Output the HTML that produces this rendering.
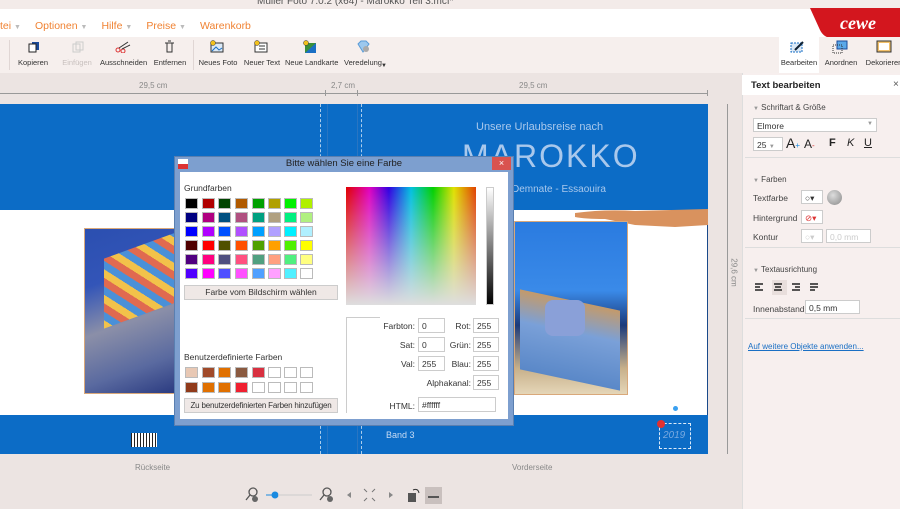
<!DOCTYPE html>
<html><head><meta charset="utf-8"><style>
*{margin:0;padding:0;box-sizing:border-box}
body{width:900px;height:509px;overflow:hidden;position:relative;background:#ece4e2;font-family:"Liberation Sans",sans-serif;font-size:9px;color:#333}
.a{position:absolute;white-space:nowrap}
.sw{position:absolute;width:13px;height:11px;border:1px solid #bbb}
.lbl{position:absolute;font-size:8.5px;color:#333;text-align:right}
.fld{position:absolute;height:15px;border:1px solid #ccc;background:#fff;font-size:8.5px;padding:2px 3px;color:#333;white-space:nowrap}
.tl{position:absolute;top:58px;font-size:7.5px;color:#333;text-align:center;white-space:nowrap}
</style></head><body>
<div class="a" style="left:0;top:0;width:900px;height:9px;background:#f3ebe9"></div>
<div class="a" style="left:257px;top:-4px;font-size:10px;color:#555">Müller Foto 7.0.2 (x64) - Marokko Teil 3.mcf*</div>
<div class="a" style="left:0;top:9px;width:900px;height:28px;background:#fff"></div>
<div class="a" style="top:20px;left:0;font-size:10.5px;color:#f08232">tei <span style="color:#bbb;font-size:7px">▼</span><span style="margin-left:14px">Optionen</span> <span style="color:#bbb;font-size:7px">▼</span><span style="margin-left:14px">Hilfe</span> <span style="color:#bbb;font-size:7px">▼</span><span style="margin-left:14px">Preise</span> <span style="color:#bbb;font-size:7px">▼</span><span style="margin-left:14px">Warenkorb</span></div>
<svg class="a" style="left:810px;top:8px" width="90" height="30"><path d="M0 0H90V30H22Q14 30 10 22Z" fill="#d3161e"/><text x="30" y="21" fill="#fff" font-family="Liberation Serif" font-style="italic" font-weight="bold" font-size="18">cewe</text></svg>
<div class="a" style="left:0;top:37px;width:900px;height:36px;background:#f6efed"></div>
<div class="a" style="left:9px;top:40px;width:1px;height:30px;background:#e0d6d4"></div>
<div class="a" style="left:193px;top:40px;width:1px;height:30px;background:#e0d6d4"></div>
<div class="a" style="left:779px;top:37px;width:40px;height:36px;background:#fff"></div>
<svg class="a" style="left:28px;top:41px" width="12" height="12"><rect x="4" y="1" width="7" height="8" fill="#1a4a9a"/><rect x="1" y="3" width="7" height="8" fill="#fff" stroke="#222"/></svg>
<svg class="a" style="left:72px;top:41px" width="12" height="12"><rect x="1" y="3" width="7" height="8" fill="none" stroke="#ccc"/><rect x="4" y="1" width="7" height="8" fill="none" stroke="#ccc"/></svg>
<svg class="a" style="left:115px;top:41px" width="16" height="12"><circle cx="3" cy="9" r="2" stroke="#d33" fill="none"/><circle cx="8" cy="10" r="2" stroke="#d33" fill="none"/><path d="M4 7L13 1M7 8L15 4" stroke="#333"/></svg>
<svg class="a" style="left:164px;top:40px" width="11" height="13"><path d="M1 3H10M3 3V12H8V3M4 1H7" stroke="#333" fill="none"/></svg>
<svg class="a" style="left:210px;top:40px" width="14" height="13"><rect x="1" y="3" width="12" height="9" fill="#dbe9f7" stroke="#333"/><path d="M2 11L6 7L9 10L12 8" stroke="#1a6fc4" fill="none"/><circle cx="3" cy="3" r="2.5" fill="#f2c11c" stroke="#333" stroke-width=".5"/></svg>
<svg class="a" style="left:254px;top:40px" width="14" height="13"><rect x="1" y="3" width="12" height="9" fill="#fff" stroke="#333"/><path d="M5 6H11M5 9H11" stroke="#333"/><circle cx="3" cy="3" r="2.5" fill="#f2c11c" stroke="#333" stroke-width=".5"/></svg>
<svg class="a" style="left:303px;top:40px" width="14" height="14"><rect x="2" y="3" width="11" height="10" fill="#3a8f3a"/><path d="M2 13L13 3V13Z" fill="#1a6fc4"/><circle cx="3" cy="3" r="2.5" fill="#f2c11c" stroke="#333" stroke-width=".5"/></svg>
<svg class="a" style="left:356px;top:40px" width="14" height="13"><path d="M2 4L5 1H10L13 4L7 12Z" fill="#9cc8ee" stroke="#5a9bd6"/><circle cx="10" cy="9" r="3" fill="#aaa"/></svg>
<svg class="a" style="left:790px;top:40px" width="16" height="14"><rect x="1" y="3" width="11" height="9" fill="#dbe9f7" stroke="#1a6fc4" stroke-dasharray="2 1"/><path d="M5 10L13 2" stroke="#123" stroke-width="2"/></svg>
<svg class="a" style="left:832px;top:40px" width="16" height="14"><rect x="5" y="1" width="10" height="8" fill="#5aa8e8" stroke="#1a4a9a"/><rect x="1" y="5" width="9" height="8" fill="none" stroke="#333" stroke-dasharray="1 1"/></svg>
<svg class="a" style="left:876px;top:40px" width="16" height="14"><rect x="1" y="1" width="14" height="11" fill="#f2c06a" stroke="#333"/><rect x="3" y="3" width="10" height="7" fill="#fff"/></svg>
<div class="tl" style="left:18px;width:30px">Kopieren</div>
<div class="tl" style="left:60px;width:34px;color:#c8c0be">Einfügen</div>
<div class="tl" style="left:100px;width:46px">Ausschneiden</div>
<div class="tl" style="left:152px;width:36px">Entfernen</div>
<div class="tl" style="left:198px;width:40px">Neues Foto</div>
<div class="tl" style="left:243px;width:38px">Neuer Text</div>
<div class="tl" style="left:285px;width:52px">Neue Landkarte</div>
<div class="tl" style="left:343px;width:40px">Veredelung</div>
<div class="a" style="left:381px;top:63px;font-size:6px">▼</div>
<div class="tl" style="left:779px;width:40px">Bearbeiten</div>
<div class="tl" style="left:822px;width:38px">Anordnen</div>
<div class="tl" style="left:864px;width:40px">Dekorieren</div>
<div class="a" style="left:0;top:73px;width:742px;height:30px;background:#ece4e2"></div>
<div class="a" style="left:139px;top:81px;font-size:8px;color:#888">29,5 cm</div>
<div class="a" style="left:331px;top:81px;font-size:8px;color:#888">2,7 cm</div>
<div class="a" style="left:519px;top:81px;font-size:8px;color:#888">29,5 cm</div>
<div class="a" style="left:0;top:93px;width:708px;height:1px;background:#999"></div>
<div class="a" style="left:325px;top:90px;width:1px;height:6px;background:#999"></div>
<div class="a" style="left:357px;top:90px;width:1px;height:6px;background:#999"></div>
<div class="a" style="left:707px;top:90px;width:1px;height:6px;background:#999"></div>
<div class="a" style="left:0;top:104px;width:708px;height:350px;background:#fff;border:1px solid #1a4a8a;border-left:none"></div>
<div class="a" style="left:0;top:104px;width:708px;height:106px;background:#0c6cc6"></div>
<div class="a" style="left:0;top:415px;width:708px;height:39px;background:#0c6cc6"></div>
<div class="a" style="left:320px;top:104px;width:1px;height:350px;border-left:1px dashed #fff"></div>
<div class="a" style="left:327px;top:104px;width:1px;height:350px;background:#3a7ac0"></div>
<div class="a" style="left:357px;top:104px;width:1px;height:350px;background:#3a7ac0"></div>
<div class="a" style="left:361px;top:104px;width:1px;height:350px;border-left:1px dashed #fff"></div>
<div class="a" style="left:320px;top:104px;width:42px;height:350px;background:#0c6cc6;opacity:.35"></div>
<div class="a" style="left:476px;top:121px;font-size:11px;color:#a9c8ec">Unsere Urlaubsreise nach</div>
<div class="a" style="left:462px;top:138px;font-size:32px;color:#a9c8ec;letter-spacing:2px">MAROKKO</div>
<div class="a" style="left:512px;top:184px;font-size:10px;color:#a9c8ec">Demnate - Essaouira</div>
<svg class="a" style="left:575px;top:207px" width="133" height="22"><path d="M0 6Q30 2 60 4L133 2V18L100 20L60 18L30 12Q10 12 0 10Z" fill="#d9925e"/></svg>
<div class="a" style="left:84px;top:228px;width:95px;height:166px;border:1px solid #d9a87a;background:linear-gradient(160deg,#2b4fb0 0%,#3355b8 30%,#8b8fa8 55%,#5a6aa0 80%,#2a3a80 100%)"></div>
<div class="a" style="left:104px;top:245px;width:75px;height:70px;background:repeating-linear-gradient(45deg,#f2c24a 0 6px,#4a90d8 6px 12px,#e06a50 12px 18px);transform:skewY(-20deg)"></div>
<div class="a" style="left:131px;top:433px;width:26px;height:14px;background:repeating-linear-gradient(90deg,#222 0 1px,#fff 1px 3px)"></div>
<div class="a" style="left:514px;top:221px;width:114px;height:174px;border:1px solid #d9a87a;background:linear-gradient(180deg,#2a7be0 0%,#3a8ae8 40%,#1c3a7a 60%,#c7b08a 85%,#e5d6b8 100%)"></div>
<div class="a" style="left:520px;top:300px;width:100px;height:80px;background:linear-gradient(180deg,#c49a6a,#7aa0d8 40%,#5a88c8);transform:skewY(12deg)"></div>
<div class="a" style="left:545px;top:300px;width:40px;height:36px;background:#8aa0d8;border-radius:8px"></div>
<div class="a" style="left:386px;top:430px;font-size:9px;color:#c8dcf4">Band 3</div>
<div class="a" style="left:659px;top:423px;width:32px;height:26px;border:1px dashed #dceaf8"></div>
<div class="a" style="left:663px;top:430px;font-size:10px;color:#7aaae0;font-style:italic">2019</div>
<div class="a" style="left:657px;top:420px;width:8px;height:8px;border-radius:50%;background:#e03030"></div>
<div class="a" style="left:673px;top:406px;width:5px;height:5px;border-radius:50%;background:#3aa0f0"></div>
<div class="a" style="left:727px;top:104px;width:1px;height:350px;background:#999"></div>
<div class="a" style="left:720px;top:268px;font-size:8px;color:#888;transform:rotate(90deg)">29,6 cm</div>
<div class="a" style="left:135px;top:463px;font-size:8px;color:#888">Rückseite</div>
<div class="a" style="left:512px;top:463px;font-size:8px;color:#888">Vorderseite</div>
<svg class="a" style="left:240px;top:484px" width="210" height="22"><circle cx="13" cy="8" r="4" fill="none" stroke="#555" stroke-width="1.3"/><path d="M10 11L6 16" stroke="#555" stroke-width="1.3"/><circle cx="15" cy="15" r="3" fill="#666"/><path d="M26 11H33" stroke="#1a8ae0"/><circle cx="35" cy="11" r="3.5" fill="#1a8ae0"/><path d="M38 11H72" stroke="#ccc"/><circle cx="87" cy="8" r="4" fill="none" stroke="#555" stroke-width="1.3"/><path d="M84 11L80 16" stroke="#555" stroke-width="1.3"/><circle cx="90" cy="15" r="3" fill="#666"/><path d="M111 8L107 11L111 14Z" fill="#888"/><path d="M124 5L127 8M135 5L132 8M124 17L127 14M135 17L132 14" stroke="#777"/><path d="M149 8L153 11L149 14Z" fill="#888"/><rect x="168" y="9" width="8" height="9" fill="#555"/><path d="M173 6Q178 4 179 9" stroke="#333" fill="none"/><rect x="185" y="3" width="17" height="17" fill="#c9c0be"/><path d="M188 13H199" stroke="#555" stroke-width="2"/></svg>
<div class="a" style="left:742px;top:73px;width:158px;height:436px;background:#f7efee;border-left:1px solid #ddd"></div>
<div class="a" style="left:742px;top:75px;width:158px;height:20px;background:#fff"></div>
<div class="a" style="left:751px;top:80px;font-size:9.5px;font-weight:bold;color:#222">Text bearbeiten</div>
<div class="a" style="left:893px;top:79px;font-size:10px;color:#555">×</div>
<div class="a" style="left:753px;top:103px;font-size:8px;color:#444"><span style="font-size:6px;color:#999">▼</span>  Schriftart &amp; Größe</div>
<div class="fld" style="left:753px;top:118px;width:124px;height:14px">Elmore<span style="position:absolute;right:3px;font-size:6px;color:#999">▼</span></div>
<div class="fld" style="left:753px;top:137px;width:30px;height:14px">25 <span style="font-size:6px;color:#999">▼</span></div>
<div class="a" style="left:786px;top:135px;font-size:14px;color:#222">A<span style="font-size:8px;color:#1a8ae0">+</span></div>
<div class="a" style="left:804px;top:137px;font-size:12px;color:#222">A<span style="font-size:8px;color:#e03030">-</span></div>
<div class="a" style="left:829px;top:137px;font-size:11px;font-weight:bold;color:#222">F</div>
<div class="a" style="left:847px;top:137px;font-size:11px;font-style:italic;color:#222">K</div>
<div class="a" style="left:864px;top:137px;font-size:11px;text-decoration:underline;color:#222">U</div>
<div class="a" style="left:745px;top:157px;width:155px;height:1px;background:#ddd"></div>
<div class="a" style="left:753px;top:175px;font-size:8px;color:#444"><span style="font-size:6px;color:#999">▼</span>  Farben</div>
<div class="a" style="left:753px;top:193px;font-size:8.5px;color:#444">Textfarbe</div>
<div class="fld" style="left:801px;top:190px;width:22px;height:14px">○▾</div>
<div class="a" style="left:827px;top:190px;width:15px;height:15px;border-radius:50%;background:radial-gradient(circle at 40% 35%,#ddd,#888)"></div>
<div class="a" style="left:753px;top:213px;font-size:8.5px;color:#444">Hintergrund</div>
<div class="fld" style="left:801px;top:210px;width:22px;height:14px;color:#d33">⊘▾</div>
<div class="a" style="left:753px;top:232px;font-size:8.5px;color:#444">Kontur</div>
<div class="fld" style="left:801px;top:229px;width:22px;height:14px;color:#ccc">○▾</div>
<div class="fld" style="left:826px;top:229px;width:45px;height:14px;color:#ccc">0,0 mm</div>
<div class="a" style="left:745px;top:247px;width:155px;height:1px;background:#ddd"></div>
<div class="a" style="left:753px;top:265px;font-size:8px;color:#444"><span style="font-size:6px;color:#999">▼</span>  Textausrichtung</div>
<div class="a" style="left:772px;top:280px;width:15px;height:15px;background:#e8dedc"></div>
<svg class="a" style="left:755px;top:282px" width="70" height="12"><path d="M0 2H8M0 5H5M0 8H8M19 2H27M20 5H26M19 8H27M37 2H45M40 5H45M37 8H45M55 2H63M55 5H63M55 8H60" stroke="#222" stroke-width="1.5"/></svg>
<div class="a" style="left:753px;top:304px;font-size:8.5px;color:#444">Innenabstand</div>
<div class="fld" style="left:805px;top:300px;width:55px;height:14px">0,5 mm</div>
<div class="a" style="left:745px;top:318px;width:155px;height:1px;background:#ddd"></div>
<div class="a" style="left:748px;top:342px;font-size:8px;color:#1a6fc4;text-decoration:underline">Auf weitere Objekte anwenden...</div>
<div class="a" style="left:174px;top:156px;width:340px;height:270px;background:#7d9fcf;border:1px solid #5a7fb0"></div>
<div class="a" style="left:180px;top:172px;width:328px;height:247px;background:#fff"></div>
<div class="a" style="left:178px;top:159px;width:10px;height:10px;background:linear-gradient(#fff 50%,#d33 50%)"></div>
<div class="a" style="left:174px;top:158px;width:340px;text-align:center;font-size:9.5px;color:#222">Bitte wählen Sie eine Farbe</div>
<div class="a" style="left:492px;top:157px;width:19px;height:13px;background:#d9534f;color:#fff;font-size:9px;text-align:center;line-height:13px">×</div>
<div class="a" style="left:184px;top:183px;font-size:8.5px">Grundfarben</div>
<div id="sw"></div>
<div class="a" style="left:184px;top:285px;width:154px;height:15px;background:#efe8e6;border:1px solid #ccc;font-size:8.5px;text-align:center;line-height:13px">Farbe vom Bildschirm wählen</div>
<div class="a" style="left:184px;top:352px;font-size:8.5px">Benutzerdefinierte Farben</div>
<div class="a" style="left:184px;top:398px;width:154px;height:15px;background:#efe8e6;border:1px solid #ccc;font-size:8px;text-align:center;line-height:13px;overflow:hidden;letter-spacing:-0.2px">Zu benutzerdefinierten Farben hinzufügen</div>
<div class="a" style="left:346px;top:187px;width:130px;height:118px;background:linear-gradient(to bottom,rgba(220,220,220,0),rgba(222,222,222,1)),linear-gradient(to right,#e00000,#e000c0 18%,#3000e0 33%,#00c0e0 50%,#00d000 67%,#e0e000 83%,#e04000)"></div>
<div class="a" style="left:486px;top:187px;width:8px;height:118px;background:linear-gradient(#fff,#000);border:1px solid #ccc"></div>
<div class="a" style="left:346px;top:317px;width:34px;height:96px;border-left:1px solid #ccc;border-top:1px solid #ccc"></div>
<div class="lbl" style="left:370px;top:321px;width:45px">Farbton:</div><div class="fld" style="left:418px;top:318px;width:27px">0</div>
<div class="lbl" style="left:370px;top:340px;width:45px">Sat:</div><div class="fld" style="left:418px;top:337px;width:27px">0</div>
<div class="lbl" style="left:370px;top:359px;width:45px">Val:</div><div class="fld" style="left:418px;top:356px;width:27px">255</div>
<div class="lbl" style="left:440px;top:321px;width:31px">Rot:</div><div class="fld" style="left:473px;top:318px;width:26px">255</div>
<div class="lbl" style="left:440px;top:340px;width:31px">Grün:</div><div class="fld" style="left:473px;top:337px;width:26px">255</div>
<div class="lbl" style="left:440px;top:359px;width:31px">Blau:</div><div class="fld" style="left:473px;top:356px;width:26px">255</div>
<div class="lbl" style="left:410px;top:378px;width:61px">Alphakanal:</div><div class="fld" style="left:473px;top:375px;width:26px">255</div>
<div class="lbl" style="left:380px;top:401px;width:35px">HTML:</div><div class="fld" style="left:418px;top:397px;width:78px">#ffffff</div>
<script>
var c=[["#000","#b00000","#004400","#b05a00","#00a000","#b0a000","#00f000","#b0f000"],
["#000080","#b00080","#005080","#b05080","#00a080","#b0a080","#00f080","#b0f080"],
["#0000ff","#b000ff","#0050ff","#b050ff","#00a0ff","#b0a0ff","#00f0ff","#b0f0ff"],
["#500000","#ff0000","#505000","#ff5000","#50a000","#ffa000","#50f000","#ffff00"],
["#500080","#ff0080","#505080","#ff5080","#50a080","#ffa080","#50f080","#ffff80"],
["#5000ff","#ff00ff","#5050ff","#ff50ff","#50a0ff","#ffa0ff","#50f0ff","#ffffff"]];
var x=[185,202,218,235,252,268,284,300],h="";
c.forEach(function(r,i){r.forEach(function(k,j){h+='<div class="sw" style="left:'+x[j]+'px;top:'+(198+i*14)+'px;background:'+k+'"></div>'})});
var u=[["#e8c8b4","#a04a2a","#e07000","#8a5a40","#d83040","#fff","#fff","#fff"],["#903a1a","#e07000","#e07000","#f02030","#fff","#fff","#fff","#fff"]];
u.forEach(function(r,i){r.forEach(function(k,j){h+='<div class="sw" style="left:'+x[j]+'px;top:'+(367+i*15)+'px;background:'+k+'"></div>'})});
document.getElementById('sw').innerHTML=h;
</script>
</body></html>
